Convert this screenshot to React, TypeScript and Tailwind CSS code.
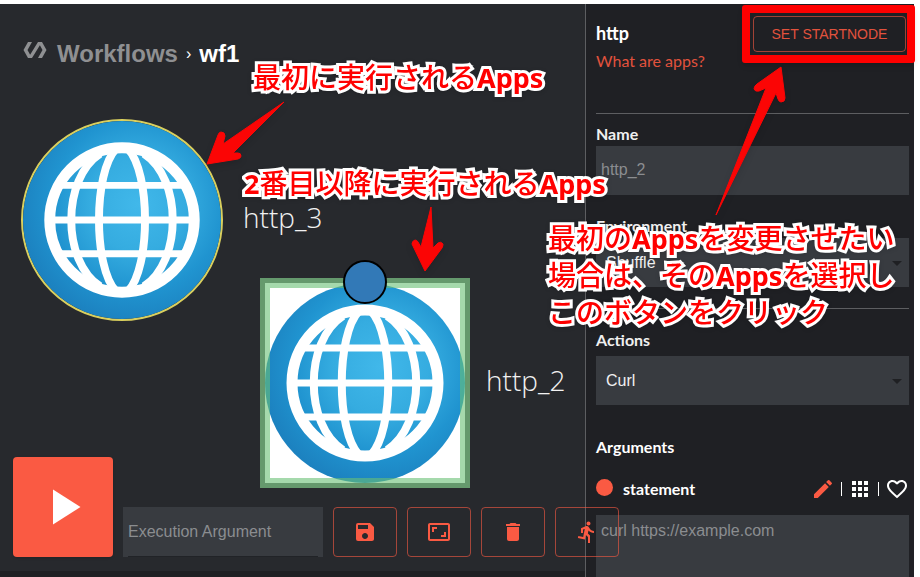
import React, { useState } from 'react';
import {
  MdApps,
  MdArrowDropDown,
  MdAspectRatio,
  MdDelete,
  MdDirectionsRun,
  MdFavoriteBorder,
  MdPlayArrow,
  MdPolymer,
  MdSave,
} from 'react-icons/md';

const Globe = ({ id, className }: { id: string; className: string }) => (
  <svg viewBox="0 0 200 200" className={className} aria-hidden="true">
    <defs>
      <radialGradient id={id} cx="0.58" cy="0.42" r="0.6">
        <stop offset="0" stopColor="#41b8ea" />
        <stop offset="0.4" stopColor="#35ace0" />
        <stop offset="0.72" stopColor="#2094d0" />
        <stop offset="1" stopColor="#1c82c0" />
      </radialGradient>
    </defs>
    <circle cx="100" cy="100" r="100" fill={`url(#${id})`} />
    <g fill="none" stroke="#fff">
      <circle cx="100" cy="100" r="73" strokeWidth="11" />
      <path strokeWidth="7" d="M28 100h144M36 65h128M36 134h128" />
      <path strokeWidth="8" d="M94 28C71 52 71 148 94 172M106 28C129 52 129 148 106 172" />
      <path strokeWidth="8" d="M78 33C39 58 39 142 78 167M122 33C161 58 161 142 122 167" />
    </g>
  </svg>
);

const PencilIcon = () => (
  <svg viewBox="0 0 24 24" className="size-6" fill="currentColor" aria-hidden="true">
    <path d="M3 17.25V21h3.75L17.81 9.94l-3.75-3.75L3 17.25zM20.71 7.04a1 1 0 0 0 0-1.41l-2.34-2.34a1 1 0 0 0-1.41 0l-1.83 1.83 3.75 3.75 1.83-1.83z" />
  </svg>
);

const Note = ({ children, className }: { children: React.ReactNode; className: string }) => (
  <p
    className={`pointer-events-none absolute z-30 whitespace-nowrap font-['Noto_Sans_CJK_JP',sans-serif] text-[28px] font-medium leading-[37px] text-[#ff0000] drop-shadow-sm [-webkit-text-stroke:6px_white] [paint-order:stroke_fill] [stroke-linejoin:round] ${className}`}
  >
    {children}
  </p>
);

const Latin = ({ children }: { children: string }) => (
  <span className="font-['Noto_Sans',sans-serif] text-[27px] font-bold leading-none">{children}</span>
);

const Arrow = ({ d, viewBox, className }: { d: string; viewBox: string; className: string }) => (
  <svg viewBox={viewBox} className={`pointer-events-none absolute z-30 drop-shadow-md ${className}`} aria-hidden="true">
    <path d={d} fill="#fb0505" stroke="#fb0505" strokeWidth="1" strokeLinejoin="round" />
  </svg>
);

const tools = [
  { label: 'Save', Icon: MdSave },
  { label: 'Fit to screen', Icon: MdAspectRatio },
  { label: 'Delete', Icon: MdDelete },
  { label: 'Run history', Icon: MdDirectionsRun },
];

const Canvas = () => (
  <main className="relative flex min-w-0 flex-1 flex-col border-b-[6px] border-[#1f2023] bg-[#27292d]">
    <nav className="flex items-center gap-[10px] px-[23px] pt-[34px] text-2xl font-bold leading-8">
      <MdPolymer className="-mt-2 size-6 text-[#8f9092]" />
      <a href="#workflows" className="text-[#8f9092]">Workflows</a>
      <span className="-mx-0.5 text-base font-normal text-white">›</span>
      <span className="text-white">wf1</span>
    </nav>

    <div className="absolute left-[21px] top-[115px] flex items-center gap-5">
      <div className="size-[202px] rounded-full border-2 border-[#d9cf5e]">
        <Globe id="globe-start" className="size-full" />
      </div>
      <span className="pb-1.5 font-['Open_Sans',sans-serif] text-[28px] font-light text-[#f2f2f2]">http_3</span>
    </div>

    <div className="absolute left-[260px] top-[274px] flex items-center gap-4">
      <div className="relative size-[210px] overflow-hidden bg-white">
        <Globe id="globe-selected" className="absolute left-[5px] top-[5px] size-[200px]" />
        <div className="absolute inset-0 border-[5px] border-[#65996d]" />
        <div className="absolute inset-[5px] border-[5px] border-[#69bf75]/60" />
      </div>
      <span className="pb-1.5 font-['Open_Sans',sans-serif] text-[28px] font-light text-[#f2f2f2]">http_2</span>
      <span className="absolute -top-[18px] left-[83px] size-11 rounded-full border-2 border-black bg-[#3279b7]" />
    </div>

    <div className="relative z-20 mt-auto flex items-end gap-[10px] pb-[14px] pl-[13px]">
      <button
        type="button"
        aria-label="Execute"
        className="flex size-[100px] shrink-0 items-center justify-center rounded bg-[#fa5a43] text-white shadow"
      >
        <MdPlayArrow className="size-[60px]" />
      </button>
      <input
        aria-label="Execution Argument"
        placeholder="Execution Argument"
        className="h-[50px] w-[200px] shrink-0 bg-[#383b40] bg-[linear-gradient(#212327,#212327)] bg-[length:190px_1px] bg-bottom bg-no-repeat px-[5px] text-base text-white placeholder:text-[#8b8d90]"
      />
      {tools.map(({ label, Icon }) => (
        <button
          key={label}
          type="button"
          aria-label={label}
          className="flex h-[50px] w-16 shrink-0 items-center justify-center rounded border border-[#fa5a43]/60 text-[#fa5a43]"
        >
          <Icon className="size-6" />
        </button>
      ))}
    </div>

    <Note className="left-[253px] top-[54px]">
      最初に実行される<Latin>Apps</Latin>
    </Note>
    <Note className="left-[244px] top-[160px]">
      <Latin>2</Latin>番目以降に実行される<Latin>Apps</Latin>
    </Note>
    <Arrow
      viewBox="200 95 95 75"
      className="left-[200px] top-[91px] h-[75px] w-[95px]"
      d="M284 102L223 144L225 136Q225 132 221 132Q219 132 218 135L207 164L238 159Q241 158 241 156Q241 153 238 153L233 153Z"
    />
    <Arrow
      viewBox="400 200 60 75"
      className="left-[400px] top-[196px] h-[75px] w-[60px]"
      d="M431 207L433 248L438 243Q441 241 443 244Q443 246 442 248L425 271L412 244Q412 241 415 240Q417 240 418 242L421 247Z"
    />
  </main>
);

type FieldProps = { id: string; label: string; className?: string; children: React.ReactNode };

const Field = ({ id, label, className = '', children }: FieldProps) => (
  <div className={`flex flex-col ${className}`}>
    <label htmlFor={id} className="font-['Lato',sans-serif] text-base font-bold leading-6 text-[#f0f0f0]">{label}</label>
    {children}
  </div>
);

const Dropdown = ({ id, option }: { id: string; option: string }) => (
  <div className="relative">
    <select id={id} className="h-[49px] w-full appearance-none bg-[#383b40] px-[10px] text-base text-[#f0f0f0]">
      <option>{option}</option>
    </select>
    <MdArrowDropDown className="pointer-events-none absolute right-0 top-[13px] size-6 text-[#1f2023]" />
  </div>
);

const Sidebar = () => {
  const [name, setName] = useState('');

  return (
    <aside className="relative flex w-[329px] shrink-0 flex-col border-l border-[#5d5e61] bg-[#1f2024] pl-[10px] pr-[5px]">
      <header className="flex h-[109px] items-start justify-between pr-[3px] pt-3">
        <div className="pt-[3px] font-['Lato',sans-serif]">
          <h2 className="text-lg font-bold leading-7 text-white">http</h2>
          <a href="#apps" className="block text-base leading-7 text-[#e2523d]">What are apps?</a>
        </div>
        <div className="relative">
          <button
            type="button"
            className="h-9 w-[153px] rounded border border-[#fa5a43]/60 text-sm text-[#e2523d]"
          >
            SET STARTNODE
          </button>
          <span className="pointer-events-none absolute -inset-y-[11px] -left-[11px] -right-[9px] z-20 rounded-[3px] border-8 border-[#ff0000] shadow-md" />
        </div>
      </header>

      <section className="border-t border-[#5d5e61] pt-2">
        <Field id="name" label="Name">
          <input
            id="name"
            value={name}
            onChange={(e) => setName(e.target.value)}
            placeholder="http_2"
            className="h-[49px] bg-[#383b40] px-[5px] pb-0.5 text-base text-white placeholder:text-[#8b8d90]"
          />
        </Field>
        <Field id="environment" label="Environment" className="pb-[21px] pt-[19px]">
          <Dropdown id="environment" option="Shuffle" />
        </Field>
      </section>

      <section className="border-t border-[#5d5e61] pt-[19px]">
        <Field id="action" label="Actions" className="gap-1">
          <Dropdown id="action" option="Curl" />
        </Field>
      </section>

      <section className="flex flex-1 flex-col pt-[30px] font-['Lato',sans-serif]">
        <h3 className="text-base font-bold leading-6 text-white">Arguments</h3>
        <div className="flex h-[56px] items-center pt-1">
          <span className="mb-1 size-[17px] rounded-full bg-[#fa5a43]" />
          <label htmlFor="statement" className="ml-[10px] flex-1 text-base font-bold text-white">statement</label>
          <div className="flex items-center gap-[6px] text-white">
            <button type="button" aria-label="Edit" className="text-[#fa5a43]"><PencilIcon /></button>
            <span className="h-[14px] w-px bg-white" />
            <button type="button" aria-label="Apps"><MdApps className="size-6" /></button>
            <span className="h-[14px] w-px bg-white" />
            <button type="button" aria-label="Favorite"><MdFavoriteBorder className="size-6" /></button>
          </div>
        </div>
        <textarea
          id="statement"
          placeholder="curl https://example.com"
          className="min-h-[62px] flex-1 resize-none bg-[#383b40] px-[5px] py-1 font-['Liberation_Sans',sans-serif] text-base text-white placeholder:text-[#8b8d90]"
        />
      </section>

      <Note className="-left-[38px] top-[215px]">
        最初の<Latin>Apps</Latin>を変更させたい
        <br />
        場合は、その<Latin>Apps</Latin>を選択し
        <br />
        このボタンをクリック
      </Note>
      <Arrow
        viewBox="705 60 90 160"
        className="left-[119px] top-[56px] h-[160px] w-[90px]"
        d="M716 215L766 88L759 91Q755 92 754 89Q754 86 757 84L781 67L785 98Q785 102 781 102Q779 102 778 99L776 93Z"
      />
    </aside>
  );
};

const App = () => (
  <div className="min-h-screen bg-white pr-[6px] pt-1 font-['Liberation_Sans',Arial,sans-serif]">
    <div className="flex min-h-[calc(100vh-4px)]">
      <Canvas />
      <Sidebar />
    </div>
  </div>
);

export default App;
